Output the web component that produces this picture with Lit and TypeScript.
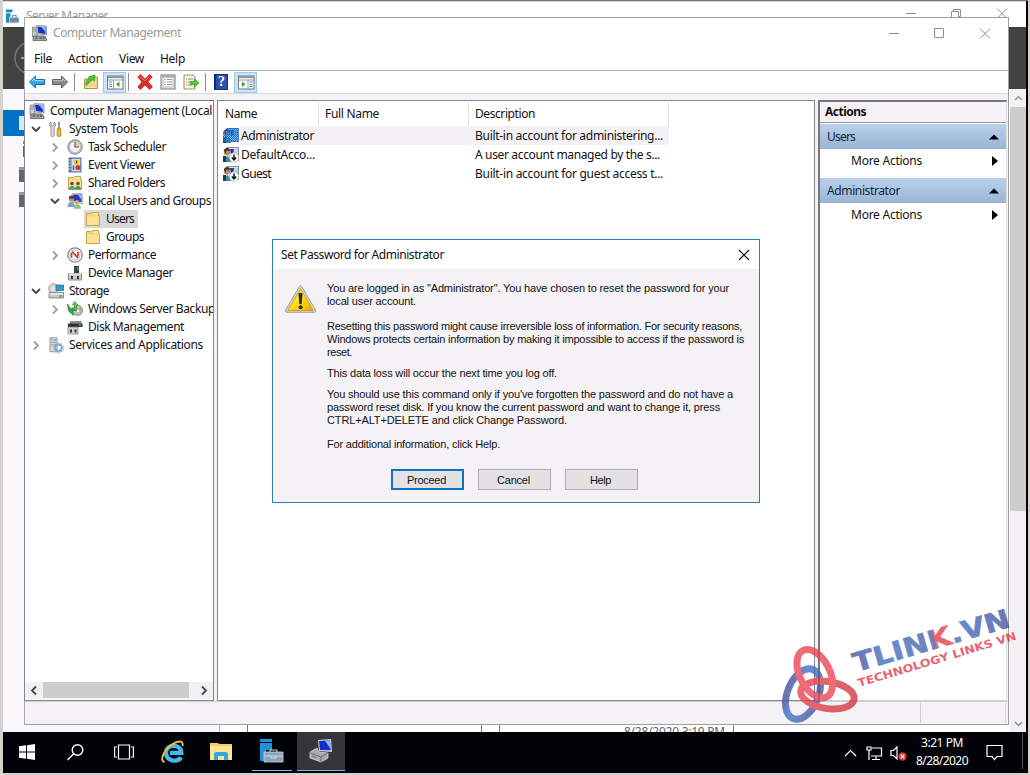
import { LitElement, html, css, svg, nothing } from "lit";
import { customElement, property } from "lit/decorators.js";
import { classMap } from "lit/directives/class-map.js";

const monitor = svg`
  <path d="M1 2h4l1 10H1z" fill="#c9cdd0" stroke="#777" stroke-width=".7"/>
  <path d="M1.500 4h3M1.500 6h3" stroke="#777" stroke-width=".7"/>
  <path d="M5 .6 15 1v9L6 9z" fill="#d3d7dc" stroke="#7d848c" stroke-width=".7"/>
  <path d="M6 1.700 14 2v7L7 8z" fill="#1b2fc4"/><path d="M9.500 1.800 14 2v5z" fill="#8fb4f4"/>
  <path d="M2 11h11l2 3v1.600H1.500z" fill="#9da3a0" stroke="#555c5c" stroke-width=".8"/>
  <path d="M4 13h2M8 13h2M11 13h2" stroke="#333" stroke-width="1.200"/>`;
const folder = svg`
  <path d="M1.500 2.500h5l1-1h6v3h1v10h-13z" fill="#f3d67f" stroke="#c59c3c" stroke-width=".9"/>
  <path d="M2 5.500h12v8.500H2z" fill="#fbe294"/><path d="M9 3h4" stroke="#fff8d8"/>`;
const userPic = svg`
  <rect x="4" y=".5" width="11.500" height="13" fill="#dfe5f2" stroke="#777" stroke-width=".8"/>
  <path d="M7 2h8v6H8z" fill="#bfd0f4"/><path d="M7 2h4l-1 6H8z" fill="#1c34b4"/>
  <circle cx="4" cy="5" r="3.300" fill="#b98a62"/><path d="M1 4c0-4 6-4 6.200-.500L3 4v3z" fill="#4a3426"/>
  <path d="M0 15c0-7 8-7 8 0z" fill="#3d8fa8"/><path d="M0 9h3v6H0z" fill="#243b4a"/>`;

const icons: Record<string, unknown> = {
  computer: monitor,
  tools: svg`
    <path d="M3 1v3l1.500 1L6 4V1c2 1 2 4 .2 5.300V14c0 2-3.200 2-3.200 0V6.300C1 5 1.200 2 3 1z" fill="#dfe1e1" stroke="#777" stroke-width=".8"/>
    <path d="M10 1h2l-.3 6h-1.400z" fill="#888"/><path d="M9.500 7h3l.5 7c0 2-4 2-4 0z" fill="#f2b429" stroke="#a8730d" stroke-width=".7"/>`,
  clock: svg`
    <circle cx="8" cy="8" r="7.300" fill="#c4c4c4" stroke="#777" stroke-width=".8"/><circle cx="8" cy="8" r="5.500" fill="#f1f5fa" stroke="#9a9a9a" stroke-width=".5"/>
    <path d="M8.500 3.300a5 5 0 0 1 4 4.500h-4z" fill="#f0c985"/><path d="M8 3v5h4" fill="none" stroke="#555" stroke-width="1.100"/>`,
  event: svg`
    <path d="M2 1h12v14H2z" fill="#5579b8" stroke="#3b5790" stroke-width=".8"/><path d="M4.500 1.800h8.800v12.500H4.500z" fill="#d7deea"/>
    <path d="M1 3h3M1 6h3M1 9h3M1 12h3" stroke="#ddd" stroke-width=".9"/>
    <circle cx="9.500" cy="5.300" r="2.800" fill="#f3c71d"/><path d="M9.500 3.500v2.800" stroke="#333"/><circle cx="11" cy="10.500" r="2.600" fill="#c93b3b"/><path d="M6.500 8.500v4.500" stroke="#3663b0" stroke-width="1.600"/>`,
  shared: svg`${folder}
    <circle cx="5" cy="8.500" r="1.800" fill="#6d4b2e"/><path d="M2 14.500c0-5 6-5 6 0z" fill="#3f9fa5"/>
    <circle cx="11" cy="8.500" r="1.800" fill="#6d4b2e"/><path d="M8 14.500c0-5 6-5 6 0z" fill="#4f9a48"/>`,
  group: svg`
    <path d="M5 .8 15 .5l.500 10L6 9z" fill="#d6dae0" stroke="#888" stroke-width=".7"/><path d="M6 1.800l8-.3.500 7.500L7 8z" fill="#2035c2"/><path d="M10.500 1.600l3.500-.1.300 5z" fill="#9bb6f2"/>
    <circle cx="4.500" cy="6" r="2.600" fill="#c08a5b"/><path d="M1.800 5.500c0-4 5-4 5.200 0z" fill="#4b3524"/><path d="M.5 14c0-7 7.500-7 7.500 0z" fill="#7f9fd6"/>
    <circle cx="10" cy="9.300" r="2.200" fill="#d8a56a"/><path d="M6.500 15.800c0-6 7.500-6 7.500 0z" fill="#8cc47a"/>`,
  folder,
  perf: svg`
    <circle cx="8" cy="8" r="7.200" fill="#fff" stroke="#8a8a8a" stroke-width="1.300"/><circle cx="8" cy="8" r="5.200" fill="#f4f4f4" stroke="#999" stroke-width=".6"/>
    <path d="M4.500 10.500V6M5 4.500l6 6.500M11 9.500V5" fill="none" stroke="#c9342c" stroke-width="1.600"/>`,
  device: svg`
    <path d="M7 1h5v8H7z" fill="#3c4743"/><path d="M10 2.500h1.500v2H10z" fill="#3ece5d"/><path d="M1.500 8.500h13v6.500h-13z" fill="#c9cccb" stroke="#777" stroke-width=".8"/>
    <path d="M4 11h2v3H4zM10 11h2v3h-2z" fill="#333"/><path d="M2 9h12" stroke="#fff"/>`,
  storage: svg`
    <circle cx="5.500" cy="5.500" r="4.800" fill="#d3d6d6" stroke="#8b9090" stroke-width=".8"/><circle cx="5.500" cy="5.500" r="1.200" fill="#fff"/>
    <path d="M8 2h7.500v5.500H8z" fill="#2d9ed6" stroke="#3a5a6c" stroke-width=".7"/><path d="M1 9.500h14.500v5.500H1z" fill="#c6cacb" stroke="#747a7c" stroke-width=".8"/>
    <path d="M1.500 11h13.500" stroke="#fff"/><path d="M11 13h3" stroke="#34b24c" stroke-width="1.400"/>`,
  backup: svg`
    <circle cx="10.500" cy="9.500" r="5" fill="#b9b9be" stroke="#77777d" stroke-width=".8"/><path d="M10.500 9.500l4-3a5 5 0 0 1 1 3z" fill="#d88fa0"/>
    <path d="M.5 3l1 7 5 4.500-1-5H8L5 6.500 4.500 9z" fill="#35b042" stroke="#1f7a2b" stroke-width=".7"/><path d="M7.500.5l3.500 3.500-1.500 0 .3 6-2-1-.3-5H5.500z" fill="#54cc4f" stroke="#1f7a2b" stroke-width=".5"/>
    <circle cx="11" cy="10" r="1.200" fill="#fff"/>`,
  disk: svg`
    <path d="M3 2h11.500v5H3z" fill="#8a9190"/><path d="M1 4.500h14.500v3.500H1z" fill="#2d3433"/><path d="M12 6h2" stroke="#3ece5d" stroke-width="1.300"/>
    <path d="M1 8h10v7H1z" fill="#d4d6d6" stroke="#777" stroke-width=".7"/><path d="M3 10.500h2v3H3zM7.500 10.500h2v3h-2z" fill="#333"/>`,
  services: svg`
    <path d="M2 .8h7v14H2z" fill="#d5dde2" stroke="#86939b" stroke-width=".9"/><path d="M3 3h5M3 5.500h5M3 8h5" stroke="#8b99a3"/><path d="M6.500 3h1" stroke="#29a94a"/>
    <circle cx="10.500" cy="10.800" r="3.300" fill="none" stroke="#82a8c8" stroke-width="2"/><circle cx="10.500" cy="10.800" r="4.700" fill="none" stroke="#82a8c8" stroke-width="1.200" stroke-dasharray="1.500 1.450"/>`,
  userSel: svg`${userPic}<path d="M0 3h3V0h13v14H0z" fill="#1478d4" opacity=".45"/>
    <path d="M4 .5h12M0 4.500h16M0 8.500h16M0 12.500h16M4 2.500h12M0 6.500h16M0 10.500h16" stroke="#1267c8" stroke-dasharray="1 1"/>
    <path d="M5 1.500h11M1 5.500h15M1 9.500h15M1 13.500h12M3 3.500h12M1 7.500h15M1 11.500h15" stroke="#2b7fd8" stroke-dasharray="1 1"/>`,
  userOff: svg`${userPic}<circle cx="11" cy="10.500" r="4.700" fill="#fff" stroke="#999" stroke-width=".6"/><path d="M11 7.500v5M8.800 10.600 11 13l2.200-2.400" fill="none" stroke="#111" stroke-width="1.500"/>`,
  back: svg`<path d="M.4 8 6.500 2v3.500h9v5h-9V14z" fill="#34a3e4" stroke="#1b6cae"/><path d="M2.500 7.500 5.700 4.300v2.400h9" fill="none" stroke="#a4dcfb"/>`,
  forward: svg`<path d="M15.600 8 9.500 2v3.500h-9v5h9V14z" fill="#8b8b8b" stroke="#5e5e5e"/><path d="M1.500 6.700h9V4.500l3 3" fill="none" stroke="#c6c6c6"/>`,
  up: svg`<path d="M1.500 5h4l1-2h8v11.500h-13z" fill="#f2d487" stroke="#bd9540"/><path d="M3 13.500h10" stroke="#fbe9b6"/><path d="M3 11.500c0-5 1-6.500 4-7L5.500 3 12 .8 11.500 7 10 5.700C7 7 7 8.500 3 11.500z" fill="#4fc13f" stroke="#2a8527" stroke-width=".6"/>`,
  treePane: svg`<rect x=".5" y="2" width="15.500" height="13" fill="#fff" stroke="#777"/><path d="M1 3.200h15" stroke="#8b979f" stroke-width="2"/><path d="M1 6h15M6.500 6v9" stroke="#999"/><path d="M2 8h3M2 10.300h3M2 12.600h3" stroke="#4f81b8"/><path d="M12.500 7.500v5.500l-3.500-2.700z" fill="#3aa335"/>`,
  del: svg`<path d="M.8 3 3.500.5 8 5l4.700-4.500 2.500 2.300L11 7.800l4.500 5-2.700 2.700L8 11l-4.700 4.500L.8 13 5 8z" fill="#dc2f2b" stroke="#a81714" stroke-width=".7"/><path d="M2.500 2.500l5.500 4 4.500-4" stroke="#f77" fill="none"/>`,
  props: svg`<rect x="1" y="1" width="14" height="14" fill="#e8ecef" stroke="#777"/><rect x="3" y="3.500" width="10" height="9.500" fill="#fff" stroke="#a7b0b7" stroke-width=".8"/><path d="M4.500 5.500h1M4.500 8h1M4.500 10.500h1" stroke="#3670aa" stroke-width="1.200"/><path d="M7 5.500h5M7 8h5M7 10.500h5M2 2.200h12" stroke="#8f9ca7"/>`,
  exportList: svg`<path d="M1 1h9l2 2v12H1z" fill="#f9f5dc" stroke="#969078"/><path d="M3 5h1M3 8h1M3 11h1" stroke="#b84" stroke-width="1.200"/><path d="M5 5h5M5 8h4M5 11h4" stroke="#888"/><path d="M7.500 7.500h4V5l4.500 4-4.500 4v-2.500h-4z" fill="#5bcb42" stroke="#2d8c27" stroke-width=".7"/>`,
  actionPane: svg`<rect x=".5" y="2" width="15.500" height="13" fill="#fff" stroke="#777"/><path d="M1 3.200h15" stroke="#8b979f" stroke-width="2"/><path d="M1 6h15M10 6v9" stroke="#999"/><path d="M11.500 8h3M11.500 10.300h3M11.500 12.600h3" stroke="#4f81b8"/><path d="M4 7.500v5.500l3.500-2.700z" fill="#3aa335"/>`,
  server: svg`<path d="M1 0h7v3H1z" fill="#2586c8"/><path d="M1 4h5v10H1z" fill="#2586c8"/><path d="M5 8h10v6.500H5z" fill="#7895ab" stroke="#fff" stroke-width=".7"/><path d="M8 8V6.300h4V8M5 11h10" fill="none" stroke="#55768f" stroke-width=".9"/>`,
};

/** Single line of text whose tracking is adjusted to fill `w` pixels. */
@customElement("fit-text")
class FitText extends LitElement {
  @property() t = "";
  @property({ type: Number }) w = 0;
  static styles = css`:host { display: inline-block; white-space: pre; flex: none; }`;
  render() { return html`${this.t}`; }
  updated() {
    this.style.letterSpacing = "0px";
    const natural = this.getBoundingClientRect().width;
    if (this.w && this.t) this.style.letterSpacing = `${(this.w - natural) / this.t.length}px`;
  }
}

@customElement("ui-icon")
class UiIcon extends LitElement {
  @property() name = "";
  static styles = css`:host { display: block; width: 16px; height: 16px; flex: none; } svg { display: block; width: 100%; height: 100%; overflow: visible; }`;
  render() { return html`<svg viewBox="0 0 16 16">${icons[this.name]}</svg>`; }
}

const ft = (t: string, w: number) => html`<fit-text .t=${t} .w=${w}></fit-text>`;

type Node = [depth: number, state: "" | "open" | "shut", icon: string, label: string, w: number];
const tree: Node[] = [
  [0, "", "computer", "Computer Management (Local", 162],
  [1, "open", "tools", "System Tools", 69],
  [2, "shut", "clock", "Task Scheduler", 78],
  [2, "shut", "event", "Event Viewer", 67],
  [2, "shut", "shared", "Shared Folders", 77],
  [2, "open", "group", "Local Users and Groups", 123],
  [3, "", "folder", "Users", 28],
  [3, "", "folder", "Groups", 38],
  [2, "shut", "perf", "Performance", 68],
  [2, "", "device", "Device Manager", 85],
  [1, "open", "storage", "Storage", 40],
  [2, "shut", "backup", "Windows Server Backup", 127],
  [2, "", "disk", "Disk Management", 96],
  [1, "shut", "services", "Services and Applications", 134],
];

const users: [string, string, number, string, number][] = [
  ["userSel", "Administrator", 73, "Built-in account for administering...", 188],
  ["userOff", "DefaultAcco...", 74, "A user account managed by the s...", 185],
  ["userOff", "Guest", 30, "Built-in account for guest access t...", 188],
];

const message: [string, number][][] = [
  [["You are logged in as \"Administrator\". You have chosen to reset the password for your", 402], ["local user account.", 89]],
  [["Resetting this password might cause irreversible loss of information. For security reasons,", 415], ["Windows protects certain information by making it impossible to access if the password is", 417], ["reset.", 25]],
  [["This data loss will occur the next time you log off.", 230]],
  [["You should use this command only if you've forgotten the password and do not have a", 406], ["password reset disk. If you know the current password and want to change it, press", 393], ["CTRL+ALT+DELETE and click Change Password.", 240]],
  [["For additional information, click Help.", 173]],
];

@customElement("app-root")
class AppRoot extends LitElement {
  static styles = css`
    :host { display: block; position: relative; width: 1030px; height: 775px; overflow: hidden; background: #d5d2ce; font: 12px/18px "Noto Sans", "Open Sans", sans-serif; color: #111; }
    * { box-sizing: border-box; }
    svg { display: block; overflow: visible; }
    .desktop { position: absolute; left: 3px; top: 0; width: 1025px; height: 773px; background: #000; border-top: 1px solid #77747a; }
    .back { position: absolute; left: 3px; top: 1px; width: 1023px; height: 731px; background: #fbf8fd; display: flex; flex-direction: column; border-top: 1px solid #d8d5d8; }
    .back-title { height: 25px; background: #fff; display: flex; align-items: center; color: #999; padding: 2px 19px 0 2px; flex: none; }
    .back-title ui-icon { width: 15px; margin-right: 6px; margin-top: 2px; }
    .back-title .controls { margin-bottom: 5px; }
    .back-head { height: 62px; background: #424242; flex: none; }
    .back-head svg { width: 21px; height: 62px; }
    .back-body { flex: 1; display: flex; justify-content: space-between; min-height: 0; }
    .back-nav { width: 21px; padding-top: 21px; display: flex; flex-direction: column; align-items: flex-end; }
    .back-nav .sel { width: 21px; height: 26px; background: #0072c6; margin-bottom: 5px; display: flex; justify-content: flex-end; align-items: center; }
    .back-nav .sel i { width: 5px; height: 14px; background: #d5eafa; }
    .back-nav b { width: 5px; height: 15px; background: #666; margin-bottom: 10px; border-top: 3px solid #999; }
    .back-nav b.gap { height: 16px; background: linear-gradient(#888 3px, #fff 3px 5px, #666 5px); border: 0; width: 1px; }
    .vscroll { width: 17px; background: #f4f1f5; display: flex; flex-direction: column; border-left: 1px solid #fff; }
    .vscroll svg { width: 16px; height: 18px; }
    .vscroll .thumb { height: 404px; background: #cdcdcd; }
    .vscroll .down { margin-top: auto; }
    .strip { position: absolute; left: 219px; top: 724px; width: 791px; height: 8px; display: flex; background: #fff; overflow: hidden; border-left: 1px solid #b4b4b4; }
    .strip span { border-right: 1px solid #777; flex: none; }
    .s1 { width: 28px; } .s2 { width: 234px; } .s3 { width: 18px; }
    .s4 { width: 234px; color: #666; display: flex; justify-content: flex-end; padding-right: 8px; }
    .s4 fit-text { margin-top: -1px; }

    .win { position: absolute; left: 24px; top: 17px; width: 985px; height: 708px; background: #fff; border: 1px solid #9d9d9f; border-left-color: #aaa; display: flex; flex-direction: column; }
    .title { height: 30px; display: flex; align-items: center; color: #999; padding: 0 18px 0 6px; flex: none; }
    .title ui-icon { margin-right: 5px; width: 17px; }
    .controls { margin-left: auto; display: flex; }
    .menu { height: 23px; display: flex; align-items: center; gap: 16px; padding-left: 9px; border-bottom: 1px solid #b5b3b7; flex: none; }
    .tools { height: 23px; display: flex; align-items: center; border-bottom: 1px solid #dddadd; padding-left: 4px; flex: none; }
    .tools ui-icon { margin-right: 7px; width: 16px; height: 16px; }
    .tools .sep { width: 1px; height: 18px; background: #8f8f8f; margin: 0 8px 0 -1px; }
    .tools .on { background: #cce4f7; border: 1px solid #9bccf0; height: 21px; width: 23px; display: flex; align-items: center; justify-content: center; margin-left: -3px; margin-right: 3px; }
    .tools .on ui-icon { margin: 0; }
    .help { width: 14px; height: 16px; background: #2c4fae; color: #fff; font: bold 14px/14px "Liberation Serif", serif; text-align: center; margin-right: 9px; border: 1px solid #173078; border-left: 2px solid #15296a; }
    .panes { flex: 1; display: flex; gap: 3px; background: #f5f2f5; padding: 6px 1px 0 0; min-height: 0; }
    .pane { background: #fff; border: 1px solid #828790; display: flex; flex-direction: column; }
    .tree { width: 190px; margin-left: -1px; border-top-color: #77777c; overflow: hidden; padding-top: 1px; }
    .node { height: 18px; display: flex; align-items: center; flex: none; overflow: hidden; }
    .d0 { padding-left: 4px; } .d1 { padding-left: 5px; } .d2 { padding-left: 24px; } .d3 { padding-left: 60px; }
    .exp { width: 12px; height: 12px; margin-right: 6px; flex: none; }
    .node ui-icon { margin-right: 5px; }
    .lab { display: flex; align-items: center; height: 18px; }
    .node.sel .lab { background: #d9d9d9; padding: 0 4px 0 1px; margin-left: -1px; }
    .hscroll { margin-top: auto; height: 17px; margin-bottom: 1px; background: #f2f0f2; display: flex; flex: none; }
    .hscroll svg { width: 18px; height: 17px; }
    .hscroll .thumb { width: 146px; background: #cdcdcd; height: 16px; }
    .hscroll svg:last-child { margin-left: 5px; }
    .list { width: 598px; }
    .cols { display: grid; grid-template-columns: 101px 150px 200px; }
    .cols.head { height: 25px; padding-top: 1px; }
    .cols.head div { padding-left: 6px; border-right: 1px solid #e3e1e3; display: flex; align-items: center; }
    .cols.head div:first-child { padding-left: 7px; }
    .cols.row { height: 19px; align-items: center; width: 451px; }
    .cols.row.hot { background: linear-gradient(90deg, #fff 22px, #f4f1f4 22px); }
    .cols.row div { display: flex; align-items: center; }
    .cols.row div:first-child { padding-left: 5px; gap: 2px; }
    .cols.row div:last-child { padding-left: 6px; }
    .actions { width: 189px; border-left: 2px solid #77777b; border-top: 2px solid #77777b; border-right-color: #ddd; border-bottom-color: #ccc; }
    .atitle { height: 21px; background: #f5f2f5; border-bottom: 1px solid #97959a; font-weight: 700; padding-left: 5px; display: flex; align-items: center; margin-bottom: 1px; }
    .group { height: 25px; background: linear-gradient(#b9d1ea, #9ab4d6); display: flex; align-items: center; justify-content: space-between; padding: 0 7px; color: #12223c; }
    .more { height: 29px; padding: 0 8px 5px 31px; display: flex; align-items: center; justify-content: space-between; }
    .status { height: 23px; background: #f5f2f5; border-top: 1px solid #d2cfd3; display: flex; justify-content: flex-end; flex: none; padding: 1px 2px 1px 0; }
    .status span { width: 86px; border-left: 1px solid #cfccd0; border-right: 1px solid #d9d6d9; }

    .dialog { position: absolute; left: 272px; top: 239px; width: 488px; height: 264px; background: #f5f2f5; border: 1px solid #2b7cb8; display: flex; flex-direction: column; }
    .dtitle { height: 30px; background: #fff; display: flex; align-items: center; justify-content: space-between; padding: 0 9px 0 8px; flex: none; border-bottom: 1px solid #f0edf0; }
    .dbody { display: flex; padding: 12px 0 0 12px; height: 199px; font: 11px/13px "Liberation Sans", Arial, sans-serif; }
    .warn { width: 32px; height: 30px; margin: 2px 10px 0 0; flex: none; }
    .msg p { margin: 0 0 8px; display: flex; flex-direction: column; align-items: flex-start; }
    .msg p:first-child { margin-bottom: 12px; }
    .msg p:nth-child(4) { margin-bottom: 11px; }
    .btns { display: flex; gap: 14px; justify-content: center; padding-right: 3px; }
    .btn { width: 73px; height: 21px; background: #e3e1e3; border: 1px solid #adadad; font: 11px/13px "Liberation Sans", Arial, sans-serif; display: flex; align-items: center; justify-content: center; padding: 1px 2px 0 0; }
    .btn.def { border: 2px solid #0f73c4; }

    .mark { position: absolute; left: 770px; top: 590px; width: 260px; height: 140px; }
    .brand { font: 700 26px "DejaVu Sans", sans-serif; stroke-width: .7px; }
    .tag { font: 700 11px "DejaVu Sans", sans-serif; }

    .bar { position: absolute; left: 3px; top: 732px; width: 1023px; height: 41px; background: #020308; display: flex; color: #fff; }
    .bar .app { width: 48.500px; display: flex; align-items: center; justify-content: center; height: 40px; }
    .bar .run { border-bottom: 1px solid #76b9ed; width: 40px; margin: 0 5px 2px 6px; height: 39px; }
    .bar .act { background: #34363b; border-bottom: 1px solid #76b9ed; width: 48px; height: 39px; }
    .tray { margin-left: auto; display: flex; align-items: center; }
    .clock { width: 54px; display: flex; flex-direction: column; align-items: center; margin: 0 17px 2px 7px; }
    .peek { width: 1px; height: 36px; background: #555; margin: 0 3px 4px 19px; }
  `;

  private ctl(max: unknown) {
    return html`<svg class="controls" width="102" height="16" viewBox="0 0 102 16" fill="none" stroke="#8e8e8e">
      <path d="M1 8.500h10"/>${max}<path d="M92 3.500l10 10M102 3.500l-10 10"/></svg>`;
  }

  private node([d, state, icon, label, w]: Node) {
    const cls = { node: true, [`d${d}`]: true, sel: label === "Users" };
    const exp = d === 1 || d === 2
      ? html`<svg class="exp" viewBox="0 0 12 12" fill="none" stroke-width="1.800" stroke=${state === "open" ? "#444" : "#a0a0a0"}>
          ${state === "open" ? svg`<path d="M2 4l4 4 4-4"/>` : state === "shut" ? svg`<path d="M4 2.500l4 4-4 4"/>` : nothing}</svg>` : nothing;
    return html`<div class=${classMap(cls)}>${exp}<span class="lab"><ui-icon name=${icon}></ui-icon>${ft(label, w)}</span></div>`;
  }

  private actionGroup(name: string, w: number) {
    return html`<div class="group">${ft(name, w)}<svg width="10" height="6"><path d="M0 5.500h10L5 .5z" fill="#000"/></svg></div>
      <div class="more">${ft("More Actions", 71)}<svg width="6" height="10"><path d="M0 0v10l6-5z" fill="#000"/></svg></div>`;
  }

  render() {
    return html`
      <div class="desktop"></div>
      <section class="back">
        <div class="back-title"><ui-icon name="server"></ui-icon>${ft("Server Manager", 82)}
          ${this.ctl(svg`<path d="M46.500 6.500h7v7h-7zM48.500 6.500v-2h7v7h-2"/>`)}</div>
        <div class="back-head"><svg viewBox="0 0 21 62"><circle cx="28" cy="31" r="16" fill="none" stroke="#777" stroke-width="1.500"/><path d="M18 31h6" stroke="#999" stroke-width="2"/></svg></div>
        <div class="back-body">
          <div class="back-nav"><div class="sel"><i></i></div><b class="gap"></b><b></b><b></b></div>
          <div class="vscroll">
            <svg viewBox="0 0 16 18" fill="none" stroke="#9b9b9b" stroke-width="1.500"><path d="M5 11l3.500-3.500L12 11"/></svg>
            <div class="thumb"></div>
            <svg class="down" viewBox="0 0 16 18" fill="none" stroke="#888" stroke-width="1.300"><path d="M5 8l3.500 3.500L12 8"/></svg>
          </div>
        </div>
      </section>
      <div class="strip"><span class="s1"></span><span class="s2"></span><span class="s3"></span><span class="s4">${ft("8/28/2020 3:19 PM", 101)}</span></div>

      <section class="win">
        <div class="title"><ui-icon name="computer"></ui-icon>${ft("Computer Management", 128)}
          ${this.ctl(svg`<path d="M46.500 3.500h9v9h-9z"/>`)}</div>
        <nav class="menu">${ft("File", 18)}${ft("Action", 35)}${ft("View", 25)}${ft("Help", 25)}</nav>
        <div class="tools">
          <ui-icon name="back"></ui-icon><ui-icon name="forward"></ui-icon><i class="sep"></i>
          <ui-icon name="up"></ui-icon><span class="on"><ui-icon name="treePane"></ui-icon></span><i class="sep"></i>
          <ui-icon name="del"></ui-icon><ui-icon name="props"></ui-icon><ui-icon name="exportList"></ui-icon><i class="sep"></i>
          <span class="help">?</span><span class="on"><ui-icon name="actionPane"></ui-icon></span>
        </div>
        <div class="panes">
          <div class="pane tree">${tree.map((n) => this.node(n))}
            <div class="hscroll">
              <svg viewBox="0 0 18 17" fill="none" stroke="#444" stroke-width="1.800"><path d="M11 4.500l-4 4 4 4"/></svg>
              <div class="thumb"></div>
              <svg viewBox="0 0 18 17" fill="none" stroke="#444" stroke-width="1.800"><path d="M8 4.500l4 4-4 4"/></svg>
            </div>
          </div>
          <div class="pane list">
            <div class="cols head"><div>${ft("Name", 32)}</div><div>${ft("Full Name", 54)}</div><div>${ft("Description", 60)}</div></div>
            ${users.map(([icon, name, w, desc, dw], i) => html`<div class=${classMap({ cols: true, row: true, hot: i === 0 })}>
              <div><ui-icon name=${icon}></ui-icon>${ft(name, w)}</div><div></div><div>${ft(desc, dw)}</div></div>`)}
          </div>
          <div class="pane actions">
            <div class="atitle">${ft("Actions", 41)}</div>
            ${this.actionGroup("Users", 28)}${this.actionGroup("Administrator", 73)}
          </div>
        </div>
        <div class="status"><span></span></div>
      </section>

      <section class="dialog">
        <div class="dtitle">${ft("Set Password for Administrator", 163)}
          <svg width="12" height="12" stroke="#111" stroke-width="1.200"><path d="M1 1l10 10M11 1L1 11"/></svg></div>
        <div class="dbody">
          <svg class="warn" viewBox="0 0 32 30">
            <defs><linearGradient id="y" x1="0" y1="0" x2="1" y2="1"><stop offset="0" stop-color="#fff06a"/><stop offset=".5" stop-color="#ffdc16"/><stop offset="1" stop-color="#eba900"/></linearGradient></defs>
            <path d="M14.300 2.500q1.200-2 2.400 0L30.500 26q1 2.300-1.300 2.300H2q-2.300 0-1.300-2.300z" fill="#d6d3cc" stroke="#9b9890" stroke-width=".9"/>
            <path d="M15.500 4.800 28.300 26.500H2.800z" fill="url(#y)" stroke="#c5960c" stroke-width=".7"/>
            <path d="M13.500 9.500q2-1.500 4 0l-.9 10.500h-2.200z" fill="#2b2822"/><circle cx="15.600" cy="23.300" r="2" fill="#2b2822"/>
          </svg>
          <div class="msg">${message.map((p) => html`<p>${p.map(([t, w]) => ft(t, w))}</p>`)}</div>
        </div>
        <div class="btns"><span class="btn def">${ft("Proceed", 39)}</span><span class="btn">${ft("Cancel", 33)}</span><span class="btn">${ft("Help", 21)}</span></div>
      </section>

      <footer class="bar">
        <span class="app"><svg width="16" height="16" fill="#fff"><path d="M0 2.300 7 1.300v6.200H0zM8 1.200 16 0v7.500H8zM0 8.500h7v6.200l-7-1zM8 8.500h8V16l-8-1.200z"/></svg></span>
        <span class="app"><svg width="17" height="17" fill="none" stroke="#fff" stroke-width="1.400"><circle cx="10.500" cy="6" r="5.300"/><path d="M6.700 9.800.5 16"/></svg></span>
        <span class="app"><svg width="20" height="16" fill="none" stroke="#fff" stroke-width="1.200"><path d="M4.500 1h11v14h-11zM3 3H.6v10H3M17 3h2.400v10H17"/></svg></span>
        <span class="app"><svg width="24" height="24" viewBox="0 0 24 24" fill="none">
          <path d="M20 17.300c-3.500 5.500-15 4-15-4.500 0-9 15-9.500 15.300 0H9" stroke="#43b9ee" stroke-width="4.300"/>
          <path d="M3.500 22C-2 21 3 10 11 4.500c5.500-4 12-4.500 10.500 1.500" stroke="#f2c02b" stroke-width="1.900"/></svg></span>
        <span class="app"><svg width="22" height="20" viewBox="0 0 22 20"><path d="M0 1h8l1 1h13v16H0z" fill="#f3d064"/><path d="M0 4h22v14H0z" fill="#fce597"/><path d="M4 18v-6q0-2 2-2h10q2 0 2 2v6h-4v-4H8v4z" fill="#36a9dc"/></svg></span>
        <span class="app run"><svg width="25" height="24" viewBox="0 0 25 24"><path d="M1 0h12v3H1zM1 4h12v7H7v11H1z" fill="#2390dc"/><path d="M5 13h19v10H5z" fill="#8aa5b7" stroke="#c6d5df" stroke-width=".8"/><path d="M11 13v-2h7v2M5 17h19M12 17v2h5v-2" fill="none" stroke="#c9dae5"/></svg></span>
        <span class="app act"><svg width="24" height="24" viewBox="0 0 24 24"><path d="M9 1 22 0l1 13-13-1z" fill="#d0d5dc"/><path d="M10 2l11-.8.7 10L11 11z" fill="#1230c8"/><path d="m16 1.700 5-.4.700 9z" fill="#8fb2f5"/><path d="M1 13l7-4 2 4 9 1v5l-7 4-11-4z" fill="#a9aead" stroke="#e0e3e3" stroke-width=".7"/><path d="M1 14l11 4v5M12 18l7-4M3 17l4 1.500" stroke="#646b6b" fill="none"/></svg></span>
        <div class="tray">
          <svg width="64" height="18" viewBox="0 0 64 18" fill="none" stroke="#fff" stroke-width="1.200">
            <path d="M1 12 6.500 6.500 12 12"/>
            <path d="M28 4h9.500v8H27M23 3h4v3h-4zM25 6v10M32 12v3M28 15.500h8"/>
            <path d="M47 6.500h2.500L53 3v12l-3.500-3.500H47z"/>
            <circle cx="58.500" cy="12.500" r="4.200" fill="#d8343a" stroke="none"/><path d="M56.700 10.700l3.600 3.600m0-3.600-3.600 3.600"/></svg>
          <div class="clock">${ft("3:21 PM", 42)}${ft("8/28/2020", 52)}</div>
          <svg width="17" height="17" fill="none" stroke="#fff" stroke-width="1.200"><path d="M1 1.500h15v11h-5l-2.500 3-2.500-3H1z"/></svg>
          <i class="peek"></i>
        </div>
      </footer>

      <svg class="mark" viewBox="0 0 260 140" opacity=".78">
        <defs>
          <linearGradient id="b" x2="1"><stop offset="0" stop-color="#3e4f98"/><stop offset=".3" stop-color="#3d6fc8"/><stop offset=".7" stop-color="#4065b4"/><stop offset="1" stop-color="#4d4f9c"/></linearGradient>
          <linearGradient id="r" x2="1"><stop offset="0" stop-color="#e8404c"/><stop offset="1" stop-color="#cf3440"/></linearGradient>
          <linearGradient id="t" gradientUnits="userSpaceOnUse" x1="0" x2="164" y1="0" y2="0"><stop offset="0" stop-color="#464f92"/><stop offset=".2" stop-color="#3d6cc4"/><stop offset=".515" stop-color="#4560a8"/><stop offset=".515" stop-color="#e23c48"/><stop offset=".635" stop-color="#e23c48"/><stop offset=".635" stop-color="#3d6cc4"/><stop offset="1" stop-color="#474f96"/></linearGradient>
        </defs>
        <g fill="none" stroke-width="7">
          <ellipse cx="33" cy="104" rx="15.500" ry="26.500" transform="rotate(22 33 104)" stroke="url(#b)"/>
          <ellipse cx="57.500" cy="105" rx="27" ry="13.500" transform="rotate(9 57 105)" stroke="url(#r)"/>
          <ellipse cx="44.500" cy="83.500" rx="15" ry="26" transform="rotate(-27 45 83)" stroke="#e8444f"/>
        </g>
        <g transform="translate(86 82) rotate(-16.300)">
          <text class="brand" fill="url(#t)" stroke="url(#t)" textLength="162" lengthAdjust="spacingAndGlyphs">TLINK.VN</text>
        </g>
        <g transform="translate(89 97) rotate(-16.800)"><text class="tag" fill="#e03a46" textLength="165" lengthAdjust="spacingAndGlyphs">TECHNOLOGY LINKS VN</text></g>
      </svg>`;
  }
}
